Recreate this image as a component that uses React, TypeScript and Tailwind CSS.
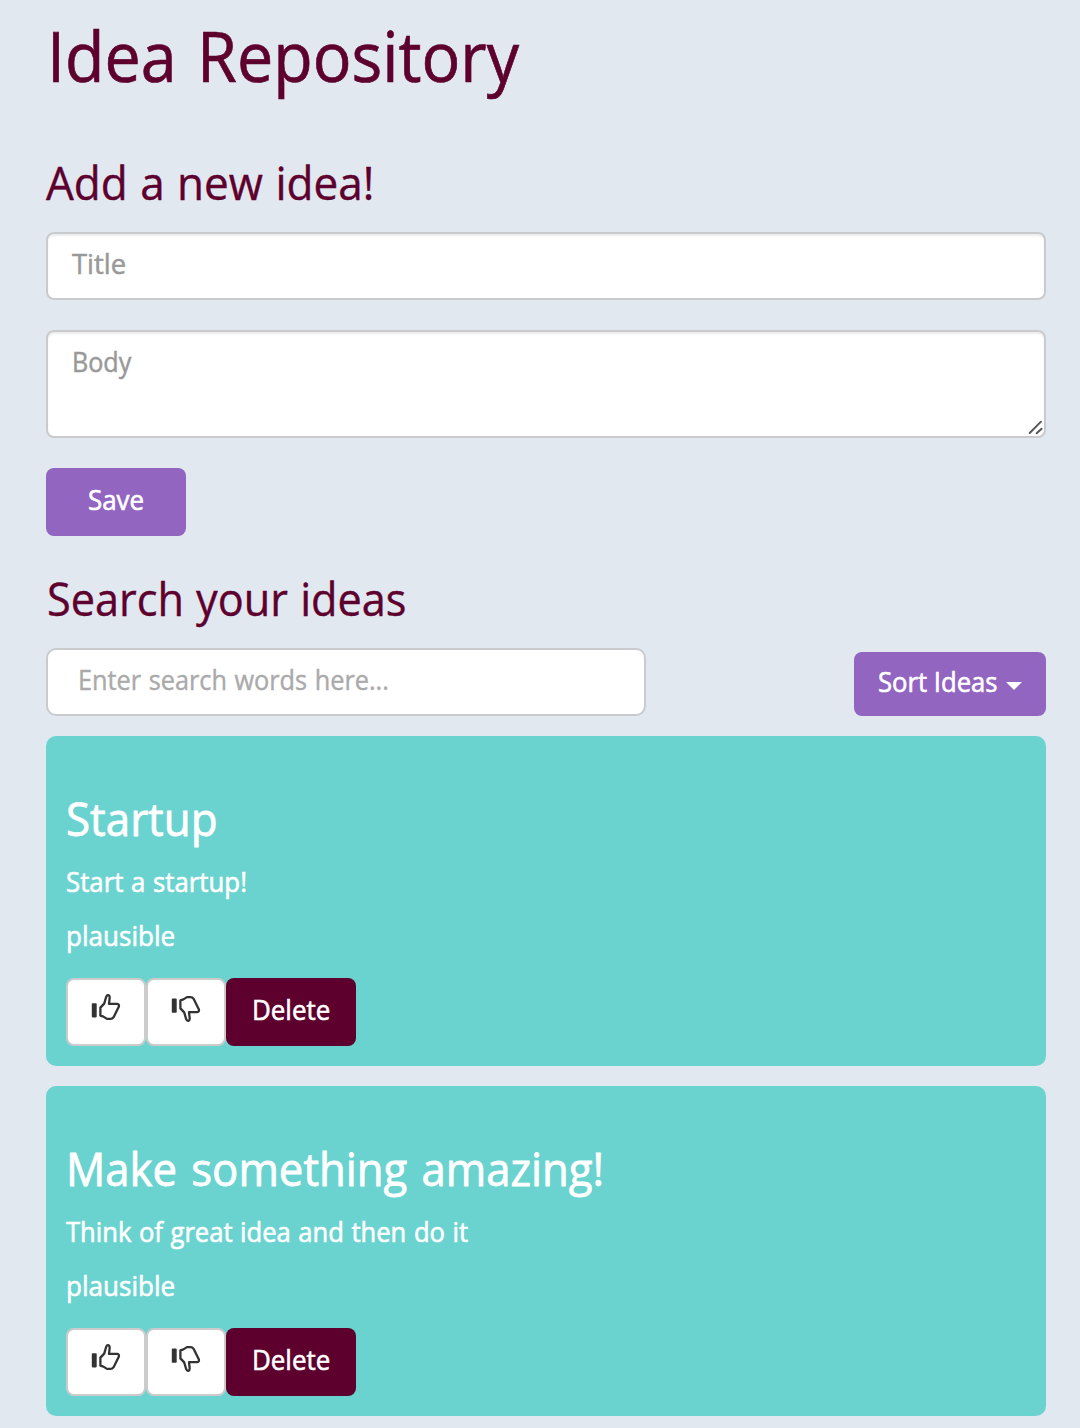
import type { ReactNode } from 'react';

const ideas = [
  { title: 'Startup', titleScale: 'scale-x-[0.955]', body: 'Start a startup!', bodyScale: 'scale-x-[0.955]', quality: 'plausible' },
  { title: 'Make something amazing!', titleScale: 'scale-x-[0.95]', body: 'Think of great idea and then do it', bodyScale: 'scale-x-[0.947]', quality: 'plausible' },
];

// Text set slightly narrower than the font's natural width.
function Narrow({ scale, children }: { scale: string; children: ReactNode }) {
  return <span className={`inline-block origin-left whitespace-nowrap ${scale}`}>{children}</span>;
}

function Thumb({ down = false }: { down?: boolean }) {
  return (
    <button
      aria-label={down ? 'Thumbs down' : 'Thumbs up'}
      className="flex h-[68px] w-20 items-start rounded-lg border-2 border-[#ccc] bg-white pt-[13px] pl-[23px]"
    >
      <svg width="30" height="30" viewBox="0 0 30 30" className={down ? '-scale-y-100' : ''}>
        <rect x="0.8" y="10.2" width="4.9" height="14.2" rx="0.8" fill="#333" />
        <path
          d="M9.4 22.6V14.6L13.2 10.6L15.2 3.8Q15.9 2 17.3 2.2Q18.8 2.6 18.7 4.6L18 10.8H26.2Q28.3 11.1 27.9 13.4L22.6 24.2Q21.4 25.9 19.5 25.9H16L12.4 23.6L9.4 22.6Z"
          fill="none"
          stroke="#333"
          strokeWidth="2.3"
          strokeLinejoin="round"
        />
      </svg>
    </button>
  );
}

export default function App() {
  return (
    <main
      className="h-[1428px] w-[1080px] overflow-hidden bg-[#e1e8f0] pt-4 pr-[34px] pl-[46px] text-[27px] leading-10 text-[#5d002e] [word-spacing:1px]"
      style={{ fontFamily: '"Open Sans", "Noto Sans", sans-serif' }}
    >
      <h1 className="h-[79px] pl-px text-[70px] leading-[79px] [word-spacing:4px] [-webkit-text-stroke:0.7px]">
        <Narrow scale="scale-x-[0.922]">Idea Repository</Narrow>
      </h1>

      <h2 className="mt-[61px] h-[53px] text-[46px] leading-[53px] [word-spacing:1px] [-webkit-text-stroke:0.4px]">
        <Narrow scale="scale-x-[0.958]">Add a new idea!</Narrow>
      </h2>
      <div className="mt-[23px] flex h-[68px] items-center rounded-lg border-2 border-[#c9cacc] bg-white pb-1 pl-6 text-[#999] shadow-[inset_0_2px_2px_rgba(0,0,0,0.075)] [-webkit-text-stroke:0.5px]">
        <Narrow scale="scale-x-[1.016]">Title</Narrow>
      </div>
      <div className="relative mt-[30px] h-[108px] rounded-lg border-2 border-[#c9cacc] bg-white pt-2.5 pl-6 text-[#999] shadow-[inset_0_2px_2px_rgba(0,0,0,0.075)] [-webkit-text-stroke:0.5px]">
        <Narrow scale="scale-x-[0.93]">Body</Narrow>
        <svg className="absolute right-px bottom-px" width="15" height="15" viewBox="0 0 15 15" stroke="#555" strokeWidth="1.9" strokeLinecap="round">
          <path d="M1.7 13L13 1.7M8.7 13.3L13.6 8.7" />
        </svg>
      </div>
      <button className="mt-[30px] flex h-[68px] w-[140px] items-center rounded-lg bg-[#9265c0] pb-1 pl-[42px] text-white [-webkit-text-stroke:0.6px]">
        <Narrow scale="scale-x-[0.96]">Save</Narrow>
      </button>

      <h2 className="mt-9 h-[53px] pl-px text-[46px] leading-[53px] [word-spacing:1px] [-webkit-text-stroke:0.4px]">
        <Narrow scale="scale-x-[0.94]">Search your ideas</Narrow>
      </h2>
      <div className="mt-[23px] flex items-end justify-between">
        <div className="flex h-[68px] w-[600px] items-center rounded-[10px] border-2 border-[#c9cacc] bg-white pb-1 pl-[30px] text-[#aaa] [-webkit-text-stroke:0.4px]">
          <Narrow scale="scale-x-[0.937]">Enter search words here...</Narrow>
        </div>
        <button className="flex h-16 w-48 items-center rounded-lg bg-[#9265c0] pb-1 pl-6 text-white [-webkit-text-stroke:0.6px]">
          <Narrow scale="scale-x-[0.95]">Sort Ideas</Narrow>
          <span className="mt-2 ml-0.5 border-x-8 border-t-8 border-x-transparent border-t-white" />
        </button>
      </div>

      <section className="mt-5 flex flex-col gap-5">
        {ideas.map((idea) => (
          <article key={idea.title} className="h-[330px] rounded-[10px] bg-[#6ad3cf] pt-14 pl-5 text-white [-webkit-text-stroke:0.6px]">
            <h3 className="h-[53px] text-[46px] leading-[53px] [word-spacing:3px] [-webkit-text-stroke:0.8px]">
              <Narrow scale={idea.titleScale}>{idea.title}</Narrow>
            </h3>
            <p className="mt-[17px] h-10">
              <Narrow scale={idea.bodyScale}>{idea.body}</Narrow>
            </p>
            <p className="mt-[14px] h-10">
              <Narrow scale="scale-x-[0.965]">{idea.quality}</Narrow>
            </p>
            <div className="mt-[22px] flex">
              <Thumb />
              <Thumb down />
              <button className="flex h-[68px] w-[130px] items-center rounded-lg bg-[#5d002e] pb-1 pl-[26px]">
                <Narrow scale="scale-x-[0.96]">Delete</Narrow>
              </button>
            </div>
          </article>
        ))}
      </section>
    </main>
  );
}
